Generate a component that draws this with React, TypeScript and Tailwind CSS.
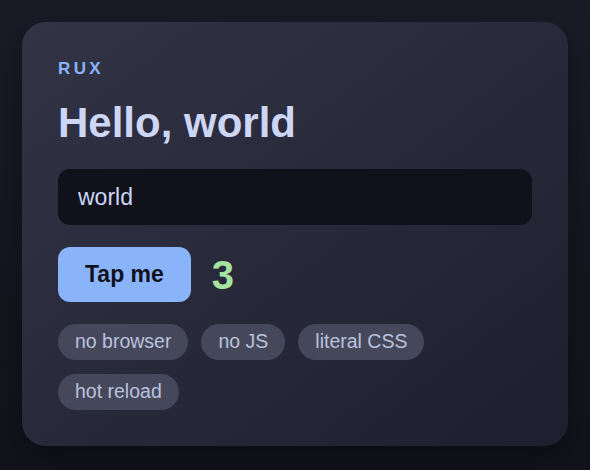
import React, { useState } from "react";

const tags = ["no browser", "no JS", "literal CSS", "hot reload"];

export default function App() {
  const [name, setName] = useState("world");
  const [count, setCount] = useState(3);

  return (
    <div className="w-[590px] h-[470px] bg-gradient-to-b from-[#1b1b28] to-[#12121b] pt-[22px] px-[22px] font-['Liberation_Sans',Arial,sans-serif]">
      <div className="w-[546px] h-[424px] rounded-[24px] bg-gradient-to-br from-[#323345] to-[#1e1f2e] shadow-[0_10px_30px_rgba(0,0,0,0.35)] pt-[38px] px-[36px] pb-[36px] flex flex-col">
        <div className="text-[17px] leading-none font-bold tracking-[0.2em] text-[#89b4fa]">
          RUX
        </div>
        <h1 className="mt-[25px] text-[42px] leading-none font-bold text-[#cdd6f4]">
          Hello, {name}
        </h1>
        <input
          value={name}
          onChange={(e) => setName(e.target.value)}
          className="mt-[25px] h-[56px] w-full rounded-[12px] bg-[#11111b] px-[20px] text-[23px] text-[#cdd6f4] outline-none"
        />
        <div className="mt-[22px] flex items-center gap-[21px]">
          <button
            onClick={() => setCount(count + 1)}
            className="h-[55px] px-[27px] rounded-[12px] bg-[#89b4fa] text-[23px] font-bold text-[#11111b]"
          >
            Tap me
          </button>
          <span className="text-[40px] leading-none font-bold text-[#a6e3a1]">
            {count}
          </span>
        </div>
        <div className="mt-[22px] flex flex-wrap gap-x-[13px] gap-y-[14px]">
          {tags.map((t) => (
            <span
              key={t}
              className="h-[36px] flex items-center rounded-full bg-[#45475a] px-[17px] text-[19.5px] text-[#bac2de]"
            >
              {t}
            </span>
          ))}
        </div>
      </div>
    </div>
  );
}
